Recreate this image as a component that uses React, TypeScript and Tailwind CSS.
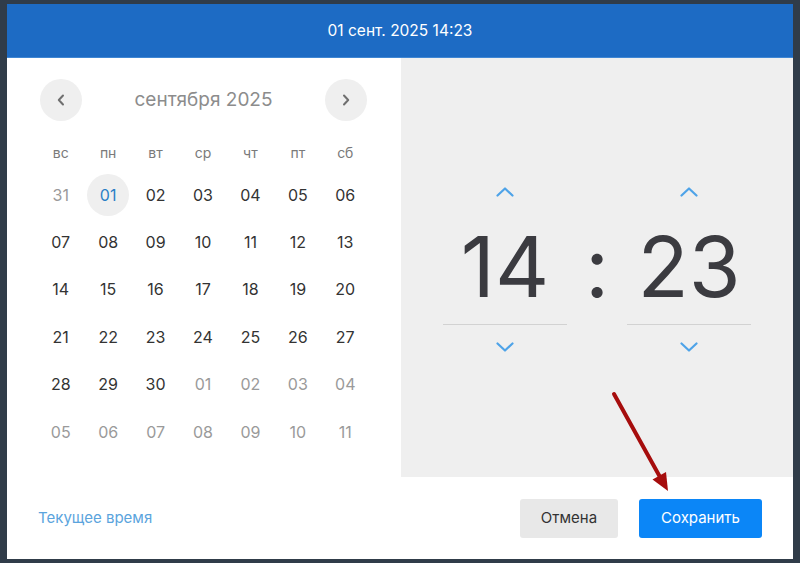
import { useState } from "react";

type Day = { d: string; other?: boolean };

const weekDays = ["вс", "пн", "вт", "ср", "чт", "пт", "сб"];

// сетка сентября 2025
const weeks: Day[][] = [
  [{ d: "31", other: true }, { d: "01" }, { d: "02" }, { d: "03" }, { d: "04" }, { d: "05" }, { d: "06" }],
  [{ d: "07" }, { d: "08" }, { d: "09" }, { d: "10" }, { d: "11" }, { d: "12" }, { d: "13" }],
  [{ d: "14" }, { d: "15" }, { d: "16" }, { d: "17" }, { d: "18" }, { d: "19" }, { d: "20" }],
  [{ d: "21" }, { d: "22" }, { d: "23" }, { d: "24" }, { d: "25" }, { d: "26" }, { d: "27" }],
  [
    { d: "28" }, { d: "29" }, { d: "30" },
    { d: "01", other: true }, { d: "02", other: true }, { d: "03", other: true }, { d: "04", other: true },
  ],
  [
    { d: "05", other: true }, { d: "06", other: true }, { d: "07", other: true }, { d: "08", other: true },
    { d: "09", other: true }, { d: "10", other: true }, { d: "11", other: true },
  ],
];

const Chevron = ({ dir }: { dir: "up" | "down" }) => (
  <svg width="18" height="10" viewBox="0 0 18 10" fill="none">
    <polyline
      points={dir === "up" ? "1.5,8.5 9,1.5 16.5,8.5" : "1.5,1.5 9,8.5 16.5,1.5"}
      stroke="#4ea3e8"
      strokeWidth="2.2"
      strokeLinecap="round"
      strokeLinejoin="round"
    />
  </svg>
);

const NavButton = ({ dir }: { dir: "left" | "right" }) => (
  <button className="w-[42px] h-[42px] rounded-full bg-[#efefef] flex items-center justify-center">
    <svg width="8" height="12" viewBox="0 0 8 12" fill="none">
      <polyline
        points={dir === "left" ? "6,1.5 1.8,6 6,10.5" : "2,1.5 6.2,6 2,10.5"}
        stroke="#6f6f6f"
        strokeWidth="2"
        strokeLinecap="round"
        strokeLinejoin="round"
      />
    </svg>
  </button>
);

const TimeColumn = ({ value }: { value: string }) => (
  <div className="w-[124px] flex flex-col items-center">
    <button className="h-[10px] flex items-center">
      <Chevron dir="up" />
    </button>
    <div className="mt-[28px] h-[84px] text-[84px] leading-none text-[#3b3b40]">{value}</div>
    <div className="mt-[15px] w-full h-px bg-[#d2d2d2]" />
    <button className="mt-[17px] h-[10px] flex items-center">
      <Chevron dir="down" />
    </button>
  </div>
);

export default function App() {
  const [hour] = useState("14");
  const [minute] = useState("23");

  return (
    <div className="relative w-[800px] h-[563px] bg-[#303c49] pt-[4px] pl-[7px] font-['Inter','Noto_Sans',sans-serif] overflow-hidden">
      <div className="w-[786px] h-[555px] bg-white flex flex-col">
        {/* заголовок */}
        <div className="h-[54px] bg-[#1d6bc4] border-b border-[#3f86d3] flex items-center justify-center text-white text-[15.5px]">
          01 сент. 2025 14:23
        </div>

        <div className="flex flex-1">
          {/* календарь */}
          <div className="w-[394px] flex flex-col">
            <div className="h-[419px] pl-[30px]">
              <div className="mt-[21px] w-[332px] h-[42px] pl-[3px] pr-[2px] flex items-center justify-between">
                <NavButton dir="left" />
                <div className="text-[19px] text-[#8c8c8c]">сентября 2025</div>
                <NavButton dir="right" />
              </div>

              <div className="mt-[21px] grid grid-cols-7 w-[332px] h-[20px] items-center">
                {weekDays.map((w) => (
                  <div key={w} className="text-center text-[14px] text-[#7a7a7a]">
                    {w}
                  </div>
                ))}
              </div>

              <div className="mt-[9px] w-[332px] grid grid-cols-7">
                {weeks.flat().map((day, i) => {
                  const selected = i === 1;
                  return (
                    <div key={i} className="h-[47.4px] flex items-center justify-center">
                      <div
                        className={
                          selected
                            ? "w-[42px] h-[42px] rounded-full bg-[#efefef] flex items-center justify-center text-[16px] text-[#2a7fc6]"
                            : day.other
                            ? "text-[16px] text-[#9a9a9a]"
                            : "text-[16px] text-[#333333]"
                        }
                      >
                        {day.d}
                      </div>
                    </div>
                  );
                })}
              </div>
            </div>
            <div className="flex-1 flex items-center pl-[31px]">
              <button className="text-[15px] text-[#5ba4dd]">Текущее время</button>
            </div>
          </div>

          {/* время */}
          <div className="flex-1 flex flex-col">
            <div className="h-[419px] bg-[#efefef] px-[42px] pt-[129px] flex items-start">
              <TimeColumn value={hour} />
              <div className="w-[60px] mt-[38px] h-[84px] text-[84px] leading-none text-[#3b3b40] text-center">:</div>
              <TimeColumn value={minute} />
            </div>
            <div className="flex-1 flex items-center justify-end gap-[21px] pr-[31px]">
              <button className="w-[98px] h-[39px] rounded-[3px] bg-[#e8e8e8] text-[15px] text-[#333333]">
                Отмена
              </button>
              <button className="w-[123px] h-[39px] rounded-[3px] bg-[#0b86f7] text-[15px] text-white">
                Сохранить
              </button>
            </div>
          </div>
        </div>
      </div>

      {/* стрелка-указатель */}
      <svg className="absolute inset-0 pointer-events-none" width="800" height="563" viewBox="0 0 800 563">
        <line x1="614" y1="394" x2="660" y2="477" stroke="#a60d0d" strokeWidth="4" strokeLinecap="round" />
        <polygon points="668,491 652.5,479.5 666,472" fill="#a60d0d" />
      </svg>
    </div>
  );
}
